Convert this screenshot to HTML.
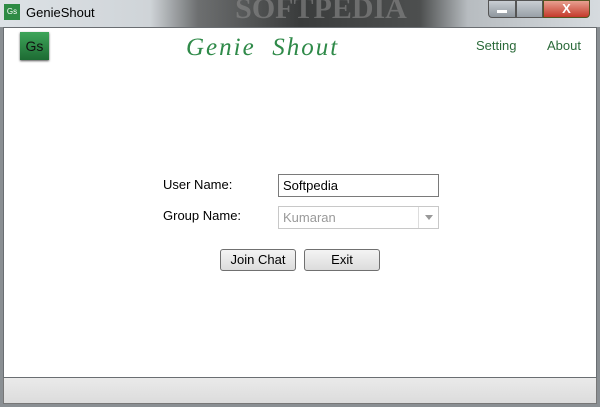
<!DOCTYPE html>
<html><head><style>
body{margin:0;width:600px;height:407px;overflow:hidden;font-family:"Liberation Sans",sans-serif;position:relative;background:#8a8f93}
.tb{position:absolute;left:0;top:0;width:600px;height:27px;background:linear-gradient(90deg,#dde2e6 0,#cfd4d8 25%,#6d6f70 33%,#3a3c3c 50%,#4d4f4f 70%,#b7bcc0 78%,#d6dbdf 100%)}
.a{position:absolute}
.client{position:absolute;left:3px;top:27px;width:594px;height:351px;background:#fff;border:1px solid #6a6e72;box-sizing:border-box}
.status{position:absolute;left:3px;top:378px;width:594px;height:26px;background:linear-gradient(#eaeaea,#dcdcdc);border:1px solid #777;border-top:none;box-sizing:border-box}
.lbl{position:absolute;font-size:13px;color:#000}
.inp{position:absolute;border:1px solid #7a7a7a;background:#fff;box-sizing:border-box;font-size:13px;padding:3px 0 0 4px}
.btn{position:absolute;border:1px solid #707070;border-radius:3px;background:linear-gradient(#f4f4f4,#dcdcdc);box-sizing:border-box;font-size:13px;text-align:center;line-height:20px}
</style></head><body>
<div class="tb"></div>
<div class="a" style="left:4px;top:4px;width:16px;height:16px;background:#2e8b45;color:#fff;font-size:8px;line-height:16px;text-align:center">Gs</div>
<div class="a" style="left:26px;top:5px;font-size:13px;color:#000">GenieShout</div>
<div class="a" style="left:211px;top:0;width:220px;height:26px;color:#8a8a8a;font-family:'Liberation Serif',serif;font-size:30px;font-weight:bold;line-height:18px;text-align:center;opacity:.6">SOFTPEDIA</div>
<div class="a" style="left:488px;top:0;width:28px;height:18px;background:linear-gradient(#c9ced3,#8e969d);border:1px solid #555;border-radius:0 0 0 4px;box-sizing:border-box"><div style="margin:9px auto 0;width:10px;height:3px;background:#fff"></div></div>
<div class="a" style="left:516px;top:0;width:27px;height:18px;background:linear-gradient(#c9ced3,#98a0a7);border:1px solid #555;box-sizing:border-box"></div>
<div class="a" style="left:543px;top:0;width:47px;height:18px;background:linear-gradient(#e8a090,#c4392a);border:1px solid #552;border-radius:0 0 4px 0;box-sizing:border-box;color:#fff;font-weight:bold;font-size:13px;text-align:center;line-height:16px">X</div>
<div class="client"></div>
<div class="status"></div>
<div class="a" style="left:20px;top:32px;width:29px;height:28px;background:linear-gradient(#3ea55a,#1d6b33);color:#111;font-size:14px;line-height:28px;text-align:center;box-shadow:0 1px 2px #555">Gs</div>
<div class="a" style="left:186px;top:34px;font-family:'Liberation Serif',serif;font-style:italic;font-size:25px;color:#2f8a49;letter-spacing:2px">Genie &nbsp;Shout</div>
<div class="a" style="left:476px;top:38px;font-size:13px;color:#2b6a3a">Setting</div>
<div class="a" style="left:547px;top:38px;font-size:13px;color:#2b6a3a">About</div>
<div class="lbl" style="left:163px;top:177px">User Name:</div>
<div class="lbl" style="left:163px;top:208px">Group Name:</div>
<div class="inp" style="left:278px;top:174px;width:161px;height:23px">Softpedia</div>
<div class="inp" style="left:278px;top:206px;width:161px;height:23px;border-color:#c8c8c8;color:#9a9a9a">Kumaran</div>
<div class="a" style="left:418px;top:207px;width:1px;height:21px;background:#ddd"></div>
<div class="a" style="left:425px;top:215px;border:4px solid transparent;border-top:5px solid #999"></div>
<div class="btn" style="left:220px;top:249px;width:76px;height:22px">Join Chat</div>
<div class="btn" style="left:304px;top:249px;width:76px;height:22px">Exit</div>
</body></html>
